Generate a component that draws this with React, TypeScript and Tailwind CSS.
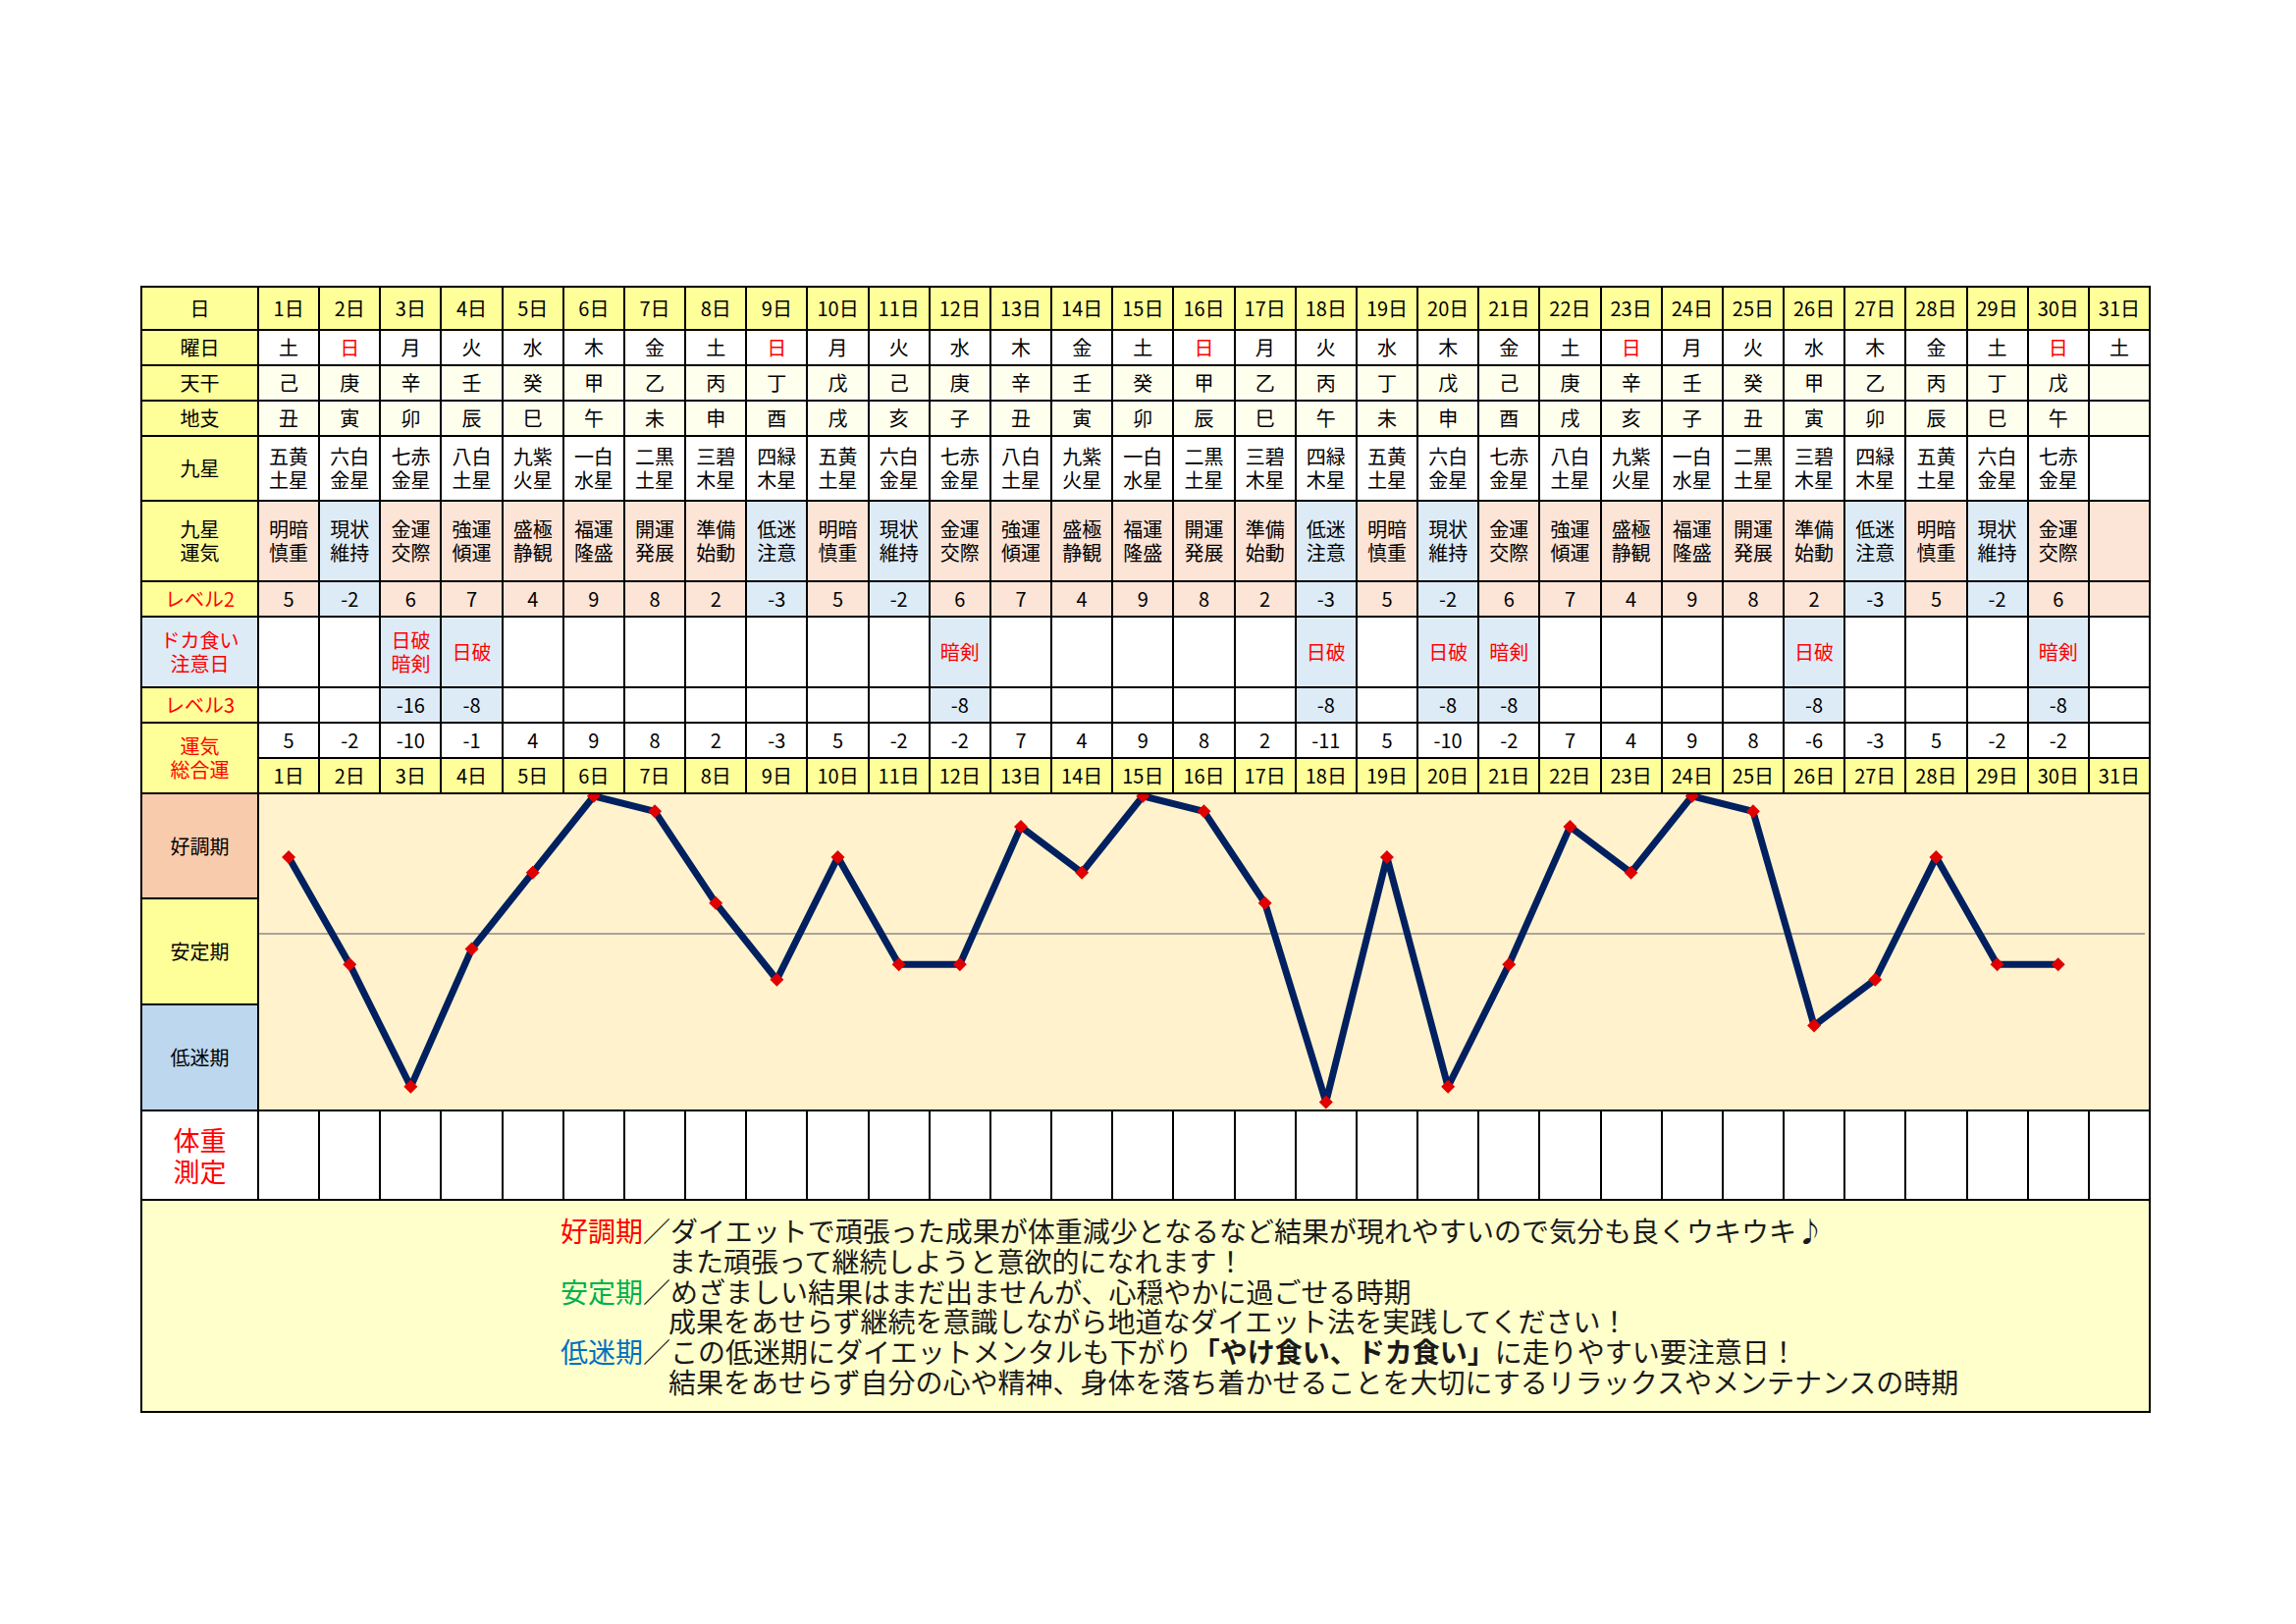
import type { ReactNode } from "react";

const days = Array.from({ length: 31 }, (_, i) => i + 1);

const weekdays = [
	"土", "日", "月", "火", "水", "木", "金", "土", "日", "月", "火", "水", "木", "金", "土", "日",
	"月", "火", "水", "木", "金", "土", "日", "月", "火", "水", "木", "金", "土", "日", "土",
];
const kan = ["己", "庚", "辛", "壬", "癸", "甲", "乙", "丙", "丁", "戊"];
const shi = ["丑", "寅", "卯", "辰", "巳", "午", "未", "申", "酉", "戌", "亥", "子"];
const stars = [
	["五黄", "土星"],
	["六白", "金星"],
	["七赤", "金星"],
	["八白", "土星"],
	["九紫", "火星"],
	["一白", "水星"],
	["二黒", "土星"],
	["三碧", "木星"],
	["四緑", "木星"],
];
const luck = [
	["明暗", "慎重"],
	["現状", "維持"],
	["金運", "交際"],
	["強運", "傾運"],
	["盛極", "静観"],
	["福運", "隆盛"],
	["開運", "発展"],
	["準備", "始動"],
	["低迷", "注意"],
];
const level2 = [5, -2, 6, 7, 4, 9, 8, 2, -3];

const dokagui: Record<number, string[]> = {
	3: ["日破", "暗剣"],
	4: ["日破"],
	12: ["暗剣"],
	18: ["日破"],
	20: ["日破"],
	21: ["暗剣"],
	26: ["日破"],
	30: ["暗剣"],
};
const level3: Record<number, number> = {
	3: -16,
	4: -8,
	12: -8,
	18: -8,
	20: -8,
	21: -8,
	26: -8,
	30: -8,
};

function fmt(v: number) {
	return v < 0 ? `-${Math.abs(v)}` : String(v);
}

function total(day: number) {
	const l2 = level2[(day - 1) % 9];
	return l2 + (level3[day] ?? 0);
}

function Cell({
	className = "",
	children,
}: {
	className?: string;
	children?: ReactNode;
}) {
	return (
		<div
			className={`flex flex-col items-center justify-center text-center leading-[24px] ${className}`}
		>
			{children}
		</div>
	);
}

function Head({
	className = "bg-[#ffff99]",
	children,
}: {
	className?: string;
	children?: ReactNode;
}) {
	return <Cell className={className}>{children}</Cell>;
}

// chart geometry (px inside the chart cell)
const CHART_W = 1925;
const CHART_H = 321;
const PITCH = 62.16;
const ZERO_Y = 142;
const UNIT = 15.58;

function Chart() {
	const pts = days
		.filter((d) => d <= 30)
		.map((d) => ({
			x: (d - 1) * PITCH + 30.08,
			y: ZERO_Y - total(d) * UNIT,
		}));
	return (
		<svg
			className="absolute inset-0 h-full w-full"
			viewBox={`0 0 ${CHART_W} ${CHART_H}`}
			preserveAspectRatio="none"
		>
			<line x1={0} y1={ZERO_Y} x2={CHART_W - 4} y2={ZERO_Y} stroke="#8a8a8a" strokeWidth={1.5} />
			<polyline
				points={pts.map((p) => `${p.x},${p.y}`).join(" ")}
				fill="none"
				stroke="#002060"
				strokeWidth={7}
				strokeLinejoin="round"
			/>
			{pts.map((p) => (
				<polygon
					key={p.x}
					points={`${p.x},${p.y - 7} ${p.x + 7},${p.y} ${p.x},${p.y + 7} ${p.x - 7},${p.y}`}
					fill="#e00000"
				/>
			))}
		</svg>
	);
}

export default function App() {
	return (
		<div className="min-h-[1654px] w-[2339px] bg-white pl-[143px] pt-[291px] font-['Noto_Sans_CJK_JP',sans-serif] text-[20px] text-black">
			<div className="grid w-[2048px] grid-cols-[117px_repeat(31,minmax(0,1fr))] grid-rows-[42px_34px_34px_34px_64px_80px_34px_70px_34px_34px_34px_105px_106px_106px_89px_214px] gap-[2px] border-2 border-black bg-black">
				{/* 日 */}
				<Head>日</Head>
				{days.map((d) => (
					<Cell key={`d${d}`} className="bg-[#ffff99]">
						{d}日
					</Cell>
				))}

				{/* 曜日 */}
				<Head>曜日</Head>
				{days.map((d) => (
					<Cell
						key={`w${d}`}
						className={weekdays[d - 1] === "日" ? "bg-white text-[#ff0000]" : "bg-white"}
					>
						{weekdays[d - 1]}
					</Cell>
				))}

				{/* 天干 */}
				<Head>天干</Head>
				{days.map((d) => (
					<Cell key={`k${d}`} className="bg-[#ffffee]">
						{d <= 30 ? kan[(d - 1) % 10] : ""}
					</Cell>
				))}

				{/* 地支 */}
				<Head>地支</Head>
				{days.map((d) => (
					<Cell key={`s${d}`} className="bg-[#ffffee]">
						{d <= 30 ? shi[(d - 1) % 12] : ""}
					</Cell>
				))}

				{/* 九星 */}
				<Head>九星</Head>
				{days.map((d) => (
					<Cell key={`st${d}`} className="bg-white">
						{d <= 30 &&
							stars[(d - 1) % 9].map((t) => <span key={t}>{t}</span>)}
					</Cell>
				))}

				{/* 九星運気 */}
				<Head>
					<span>九星</span>
					<span>運気</span>
				</Head>
				{days.map((d) => {
					const neg = d <= 30 && level2[(d - 1) % 9] < 0;
					return (
						<Cell key={`l${d}`} className={neg ? "bg-[#ddebf7]" : "bg-[#fce4d6]"}>
							{d <= 30 &&
								luck[(d - 1) % 9].map((t) => <span key={t}>{t}</span>)}
						</Cell>
					);
				})}

				{/* レベル2 */}
				<Head className="bg-[#ffff99] text-[#ff0000]">レベル2</Head>
				{days.map((d) => {
					const v = level2[(d - 1) % 9];
					const neg = d <= 30 && v < 0;
					return (
						<Cell key={`v2${d}`} className={neg ? "bg-[#ddebf7]" : "bg-[#fce4d6]"}>
							{d <= 30 ? fmt(v) : ""}
						</Cell>
					);
				})}

				{/* ドカ食い注意日 */}
				<Head className="bg-[#ddebf7] text-[#ff0000]">
					<span>ドカ食い</span>
					<span>注意日</span>
				</Head>
				{days.map((d) => (
					<Cell
						key={`dk${d}`}
						className={dokagui[d] ? "bg-[#ddebf7] text-[#ff0000]" : "bg-white"}
					>
						{dokagui[d]?.map((t) => <span key={t}>{t}</span>)}
					</Cell>
				))}

				{/* レベル3 */}
				<Head className="bg-[#ffff99] text-[#ff0000]">レベル3</Head>
				{days.map((d) => (
					<Cell key={`v3${d}`} className={level3[d] ? "bg-[#ddebf7]" : "bg-white"}>
						{level3[d] ? fmt(level3[d]) : ""}
					</Cell>
				))}

				{/* 運気総合運 */}
				<Head className="row-span-2 bg-[#ffff99] text-[#ff0000]">
					<span>運気</span>
					<span>総合運</span>
				</Head>
				{days.map((d) => (
					<Cell key={`t${d}`} className="bg-white">
						{d <= 30 ? fmt(total(d)) : ""}
					</Cell>
				))}
				{days.map((d) => (
					<Cell key={`d2${d}`} className="bg-[#ffff99]">
						{d}日
					</Cell>
				))}

				{/* chart */}
				<Head className="bg-[#f8cbad]">好調期</Head>
				<div className="relative col-span-31 row-span-3 overflow-hidden bg-[#fff2cc]">
					<Chart />
				</div>
				<Head className="bg-[#ffff99]">安定期</Head>
				<Head className="bg-[#bdd7ee]">低迷期</Head>

				{/* 体重測定 */}
				<Head className="bg-white text-[27px] leading-[32px] text-[#ff0000]">
					<span>体重</span>
					<span>測定</span>
				</Head>
				{days.map((d) => (
					<div key={`w2${d}`} className="bg-white" />
				))}

				{/* notes */}
				<div className="col-span-32 bg-[#ffffcc] pl-[426px] pt-[15px] text-[28px] leading-[30.8px] text-[#1a1a1a]">
					<p>
						<span className="text-[#ff0000]">好調期</span>
						／ダイエットで頑張った成果が体重減少となるなど結果が現れやすいので気分も良くウキウキ♪
					</p>
					<p className="pl-[110px]">また頑張って継続しようと意欲的になれます！</p>
					<p>
						<span className="text-[#00b050]">安定期</span>
						／めざましい結果はまだ出ませんが、心穏やかに過ごせる時期
					</p>
					<p className="pl-[110px]">
						成果をあせらず継続を意識しながら地道なダイエット法を実践してください！
					</p>
					<p>
						<span className="text-[#0070c0]">低迷期</span>
						／この低迷期にダイエットメンタルも下がり
						<span className="font-bold">「やけ食い、ドカ食い」</span>
						に走りやすい要注意日！
					</p>
					<p className="pl-[110px]">
						結果をあせらず自分の心や精神、身体を落ち着かせることを大切にするリラックスやメンテナンスの時期
					</p>
				</div>
			</div>
		</div>
	);
}
